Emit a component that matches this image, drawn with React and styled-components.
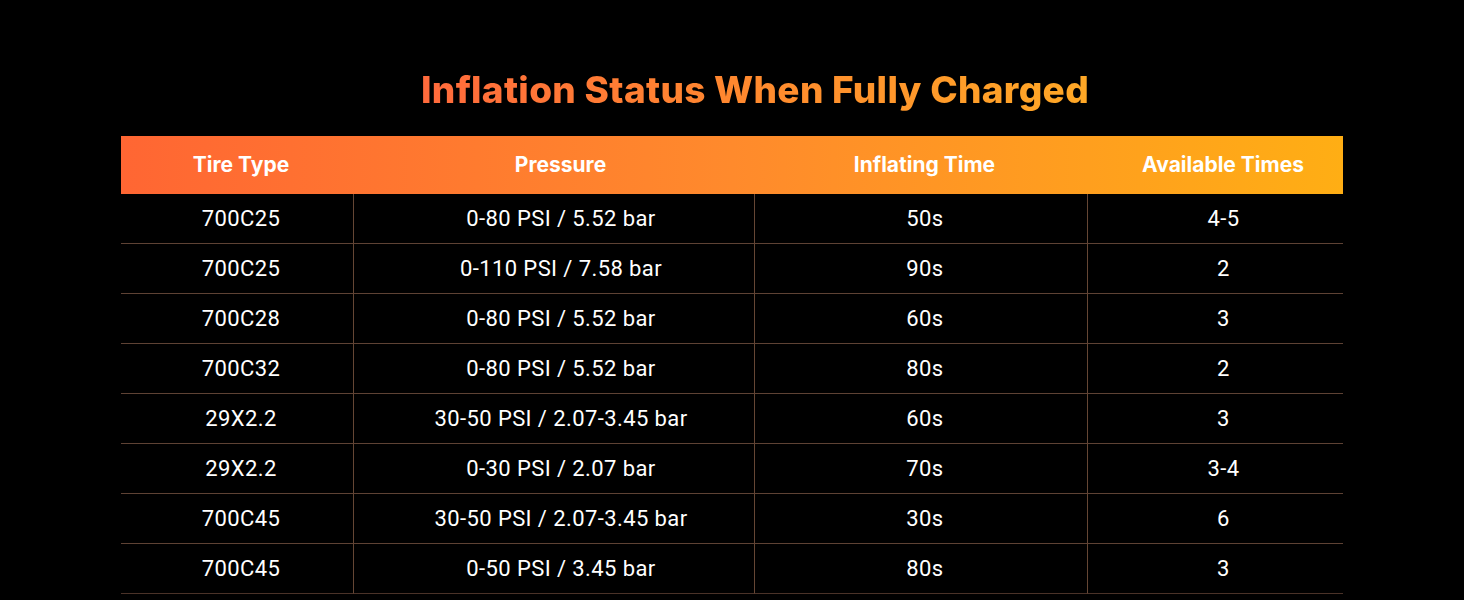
import React from "react";
import styled, { createGlobalStyle } from "styled-components";

const rows = [
  ["700C25", "0-80 PSI / 5.52 bar", "50s", "4-5"],
  ["700C25", "0-110 PSI / 7.58 bar", "90s", "2"],
  ["700C28", "0-80 PSI / 5.52 bar", "60s", "3"],
  ["700C32", "0-80 PSI / 5.52 bar", "80s", "2"],
  ["29X2.2", "30-50 PSI / 2.07-3.45 bar", "60s", "3"],
  ["29X2.2", "0-30 PSI / 2.07 bar", "70s", "3-4"],
  ["700C45", "30-50 PSI / 2.07-3.45 bar", "30s", "6"],
  ["700C45", "0-50 PSI / 3.45 bar", "80s", "3"],
];

const headers = ["Tire Type", "Pressure", "Inflating Time", "Available Times"];

// small nudges so the labels sit where they do in the artwork
const shifts = [8, 14, 8, 16];

const GlobalStyle = createGlobalStyle`
  html, body {
    margin: 0;
    padding: 0;
    background: #000;
  }
  body {
    font-family: Roboto, "Liberation Sans", sans-serif;
  }
`;

const Page = styled.div`
  width: 1464px;
  height: 600px;
  background: #000;
  overflow: hidden;
  display: flex;
  flex-direction: column;
  align-items: center;
`;

const Title = styled.h1`
  margin: 68px 0 0 46px;
  height: 68px;
  font-family: Inter, sans-serif;
  font-weight: 800;
  font-size: 37px;
  line-height: 44px;
  letter-spacing: 0.3px;
  background: linear-gradient(90deg, #ff6a3c 0%, #ff8a2e 50%, #ffa826 100%);
  -webkit-background-clip: text;
  background-clip: text;
  color: transparent;
`;

const Table = styled.div`
  width: 1222px;
  display: grid;
  grid-template-columns: 232px 401px 333px 256px;
`;

const Header = styled.div`
  grid-column: 1 / -1;
  display: grid;
  grid-template-columns: 232px 401px 333px 256px;
  background: linear-gradient(90deg, #ff6633 0%, #ff8a2c 50%, #ffae14 100%);
`;

const HeadCell = styled.div`
  height: 56px;
  padding-bottom: 2px;
  display: flex;
  align-items: center;
  justify-content: center;
  color: #fff;
  font-family: Inter, sans-serif;
  font-weight: 700;
  font-size: 21px;
  padding-left: ${(p) => p.$shift || 0}px;
`;

const Cell = styled.div`
  height: 49px;
  display: flex;
  align-items: center;
  justify-content: center;
  color: #fff;
  font-size: 22px;
  letter-spacing: 0.4px;
  border-bottom: 1px solid ${(p) => (p.$last ? "#4a3228" : "#5e4234")};
  border-left: ${(p) => (p.$first ? "none" : "1px solid #654634")};
  padding-left: ${(p) => p.$shift || 0}px;
`;

export default function App() {
  return (
    <Page>
      <GlobalStyle />
      <Title>Inflation Status When Fully Charged</Title>
      <Table>
        <Header>
          {headers.map((h, i) => (
            <HeadCell key={h} $shift={shifts[i]}>
              {h}
            </HeadCell>
          ))}
        </Header>
        {rows.map((r, ri) =>
          r.map((c, ci) => (
            <Cell
              key={ri + "-" + ci}
              $first={ci === 0}
              $last={ri === rows.length - 1}
              $shift={shifts[ci]}
            >
              {c}
            </Cell>
          ))
        )}
      </Table>
    </Page>
  );
}
